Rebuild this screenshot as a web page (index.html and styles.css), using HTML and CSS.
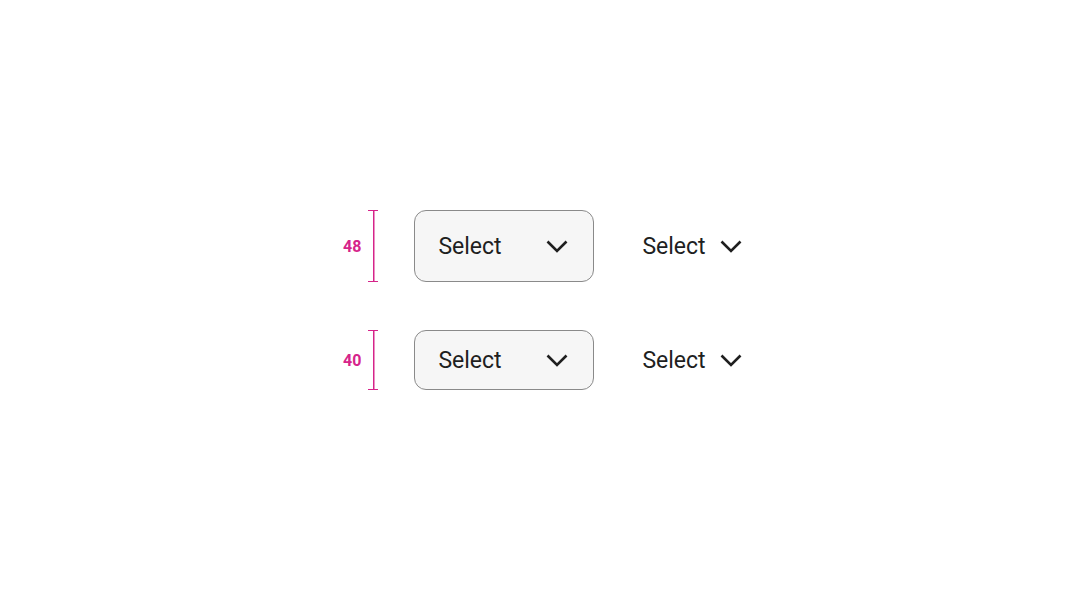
FILE: index.html
```html
<!DOCTYPE html>
<html lang="en">
<head>
    <meta charset="UTF-8">
    <meta name="viewport" content="width=device-width, initial-scale=1.0">
    <title>Select sizes</title>
    <link rel="stylesheet" href="styles.css">
</head>
<body>
    <div class="sizes">
        <!-- Large -->
        <div class="row row-lg">
            <div class="measure">
                <span class="measure-label">48</span>
                <span class="bracket"></span>
            </div>
            <div class="select-box">
                <span>Select</span>
                <svg class="chevron" viewBox="0 0 22 13"><polyline points="1.5,1.5 11,11 20.5,1.5"/></svg>
            </div>
            <div class="select-plain">
                <span>Select</span>
                <svg class="chevron" viewBox="0 0 22 13"><polyline points="1.5,1.5 11,11 20.5,1.5"/></svg>
            </div>
        </div>

        <!-- Small -->
        <div class="row row-sm">
            <div class="measure">
                <span class="measure-label">40</span>
                <span class="bracket"></span>
            </div>
            <div class="select-box">
                <span>Select</span>
                <svg class="chevron" viewBox="0 0 22 13"><polyline points="1.5,1.5 11,11 20.5,1.5"/></svg>
            </div>
            <div class="select-plain">
                <span>Select</span>
                <svg class="chevron" viewBox="0 0 22 13"><polyline points="1.5,1.5 11,11 20.5,1.5"/></svg>
            </div>
        </div>
    </div>
</body>
</html>
```

FILE: styles.css
```css
body {
    margin: 0;
    height: 600px;
    display: flex;
    align-items: center;
    justify-content: center;
    background: #fff;
    font-family: Roboto, "Noto Sans", sans-serif;
    color: #1f1f1f;
}

.sizes {
    display: flex;
    flex-direction: column;
    gap: 48px;
}

.row {
    display: flex;
    align-items: center;
    height: 72px;
}

.row-sm {
    height: 60px;
}

/* Height marker */
.measure {
    display: flex;
    align-items: center;
    gap: 7px;
    height: 100%;
    margin-right: 36px;
}

.measure-label {
    width: 20px;
    text-align: right;
    font-size: 16px;
    font-weight: bold;
    color: #d6248a;
}

.bracket {
    box-sizing: border-box;
    width: 10px;
    height: 100%;
    border-top: 1.5px solid #d6248a;
    border-bottom: 1.5px solid #d6248a;
    background: linear-gradient(#d6248a, #d6248a) center / 1.5px 100% no-repeat;
}

/* Select with outline */
.select-box {
    box-sizing: border-box;
    width: 180px;
    height: 100%;
    display: flex;
    align-items: center;
    justify-content: space-between;
    padding: 1px 25px 0 23px;
    background: #f6f6f6;
    border: 1.5px solid #8a8a8a;
    border-radius: 12px;
    font-size: 23px;
}

/* Select without container */
.select-plain {
    display: flex;
    align-items: center;
    gap: 14px;
    margin-left: 48px;
    padding-top: 1px;
    font-size: 23px;
}

.chevron {
    width: 22px;
    height: 13px;
    fill: none;
    stroke: #1f1f1f;
    stroke-width: 2.6;
}
```
